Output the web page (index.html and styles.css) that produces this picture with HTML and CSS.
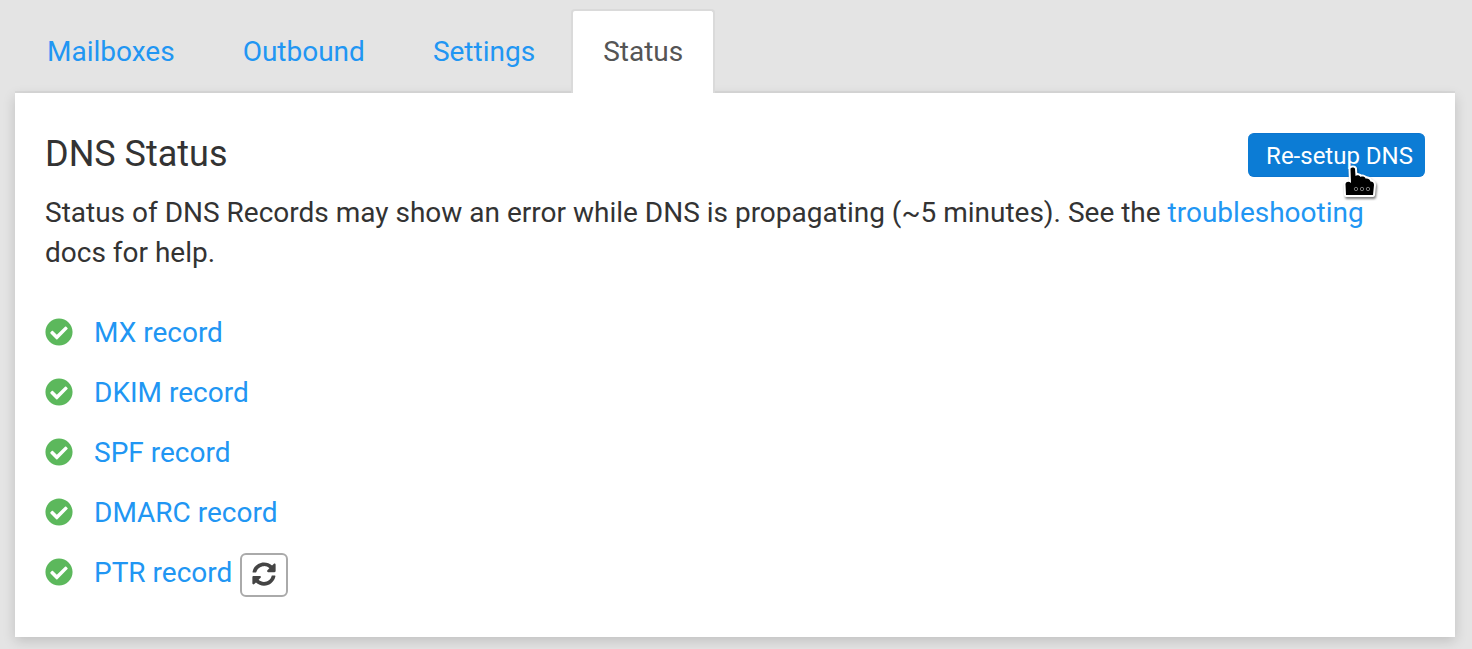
FILE: index.html
```html
<!DOCTYPE html>
<html lang="en">
<head>
<meta charset="utf-8">
<title>DNS Status</title>
<link rel="stylesheet" href="styles.css">
</head>
<body>
<svg class="sprite" aria-hidden="true">
  <symbol id="check" viewBox="0 0 512 512"><path d="M504 256c0 136.967-111.033 248-248 248S8 392.967 8 256 119.033 8 256 8s248 111.033 248 248zM227.314 387.314l184-184c6.248-6.248 6.248-16.379 0-22.627l-22.627-22.627c-6.248-6.249-16.379-6.249-22.628 0L216 308.118l-70.059-70.059c-6.248-6.248-16.379-6.248-22.628 0l-22.627 22.627c-6.248 6.248-6.248 16.379 0 22.627l104 104c6.249 6.249 16.379 6.249 22.628.001z"/></symbol>
</svg>
<nav class="tabs">
  <a class="tab" href="#mailboxes">Mailboxes</a>
  <a class="tab" href="#outbound">Outbound</a>
  <a class="tab" href="#settings">Settings</a>
  <a class="tab tab-active" href="#status" aria-current="page">Status</a>
</nav>
<main class="panel">
  <header class="panel-header">
    <h1 class="title">DNS Status</h1>
    <div class="action">
      <button class="primary" type="button">Re-setup DNS</button>
      <svg class="cursor" viewBox="0 0 36 38" aria-hidden="true">
        <path d="M7.500 4C7.500 2 12 2 12 4L12.500 11C13.500 9.500 17 10 17.500 12C19 11 22 11.500 22.500 13.500C24.500 13 27 14 27.500 16.500C29.500 16.500 31 17.500 31 20L30 30H3L2.500 19C3 16.500 6 16 8 18Z"/>
        <g class="knuckles"><circle cx="13" cy="24" r="1.700"/><circle cx="19" cy="24" r="1.700"/><circle cx="25" cy="24" r="1.700"/></g>
      </svg>
    </div>
  </header>
  <p class="intro">Status of DNS Records may show an error while DNS is propagating (~5 minutes). See the <a href="#troubleshooting">troubleshooting</a> docs for help.</p>
  <ul class="records">
    <li class="record"><svg class="check"><use href="#check"/></svg><a href="#mx">MX record</a></li>
    <li class="record"><svg class="check"><use href="#check"/></svg><a href="#dkim">DKIM record</a></li>
    <li class="record"><svg class="check"><use href="#check"/></svg><a href="#spf">SPF record</a></li>
    <li class="record"><svg class="check"><use href="#check"/></svg><a href="#dmarc">DMARC record</a></li>
    <li class="record"><svg class="check"><use href="#check"/></svg><a href="#ptr">PTR record</a>
      <button class="refresh" type="button" aria-label="Refresh PTR record"><svg class="sync" viewBox="0 0 512 512"><path d="M370.72 133.28C339.458 104.008 298.888 87.962 255.848 88c-77.458.068-144.328 53.178-162.791 126.85-1.344 5.363-6.122 9.15-11.651 9.15H24.103c-7.498 0-13.194-6.807-11.807-14.176C33.933 94.924 134.813 8 256 8c66.448 0 126.791 26.136 171.315 68.685L463.03 40.97C478.149 25.851 504 36.559 504 57.941V192c0 13.255-10.745 24-24 24H345.941c-21.382 0-32.09-25.851-16.971-40.971l41.75-41.749zM32 296h134.059c21.382 0 32.09 25.851 16.971 40.971l-41.75 41.75c31.262 29.273 71.835 45.319 114.876 45.28 77.418-.07 144.315-53.144 162.787-126.849 1.344-5.363 6.122-9.15 11.651-9.15h57.304c7.498 0 13.194 6.807 11.807 14.176C478.067 417.076 377.187 504 256 504c-66.448 0-126.791-26.136-171.315-68.685L48.97 471.03C33.851 486.149 8 475.441 8 454.059V320c0-13.255 10.745-24 24-24z"/></svg></button>
    </li>
  </ul>
</main>
</body>
</html>
```
FILE: styles.css
```css
* { box-sizing: border-box; }
body {
  margin: 0;
  padding: 9px 17px 12px 15px;
  background: #e4e4e4;
  color: #333;
  font: 28px/40px Roboto, sans-serif;
}
a { color: #2196f3; text-decoration: none; }
.sprite { position: absolute; width: 0; height: 0; }
.tabs {
  display: flex;
  gap: 4px;
  border-bottom: 2px solid #dadada;
}
.tab {
  padding: 21px 30px 19px;
  border: 2px solid transparent;
  border-bottom: 0;
  border-radius: 4px 4px 0 0;
}
.tab-active {
  position: relative;
  margin-bottom: -2px;
  border-color: #dadada;
  background: #fff;
  color: #555;
}
.panel {
  padding: 40px 30px 44px;
  background: #fff;
  box-shadow: 0 4px 12px rgba(0, 0, 0, 0.16);
}
.panel-header { display: flex; justify-content: space-between; }
.title { margin: 0; font-size: 36px; font-weight: 400; line-height: 42px; }
.action { position: relative; }
.primary {
  display: block;
  height: 44px;
  padding: 2px 12px 0 18px;
  border: 1px solid #0c75ce;
  border-width: 1px 0;
  border-radius: 6px;
  background: #0c7cd5;
  color: #fff;
  font: 24px/40px Roboto, sans-serif;
}
.cursor {
  position: absolute;
  top: 32px;
  right: 46px;
  width: 36px;
  height: 38px;
  overflow: visible;
  fill: #000;
  stroke: #fff;
  stroke-width: 4px;
  stroke-linejoin: round;
  paint-order: stroke;
  filter: drop-shadow(1px 2px 1px rgba(0, 0, 0, 0.5));
}
.knuckles { fill: none; stroke: #777; stroke-width: 1px; }
.intro { margin: 16px 0 40px; }
.records {
  display: grid;
  gap: 20px;
  margin: 0;
  padding: 0;
  list-style: none;
}
.record { display: flex; align-items: center; height: 40px; }
.check { width: 28px; height: 28px; margin: 0 21px 2px 0; fill: #5cb85c; }
.refresh {
  display: grid;
  place-items: center;
  width: 48px;
  height: 44px;
  margin: 4px 0 0 8px;
  padding: 0 0 2px;
  border: 2px solid #aaa;
  border-radius: 6px;
  background: #fff;
}
.sync { width: 24px; height: 24px; fill: #444; }
```
